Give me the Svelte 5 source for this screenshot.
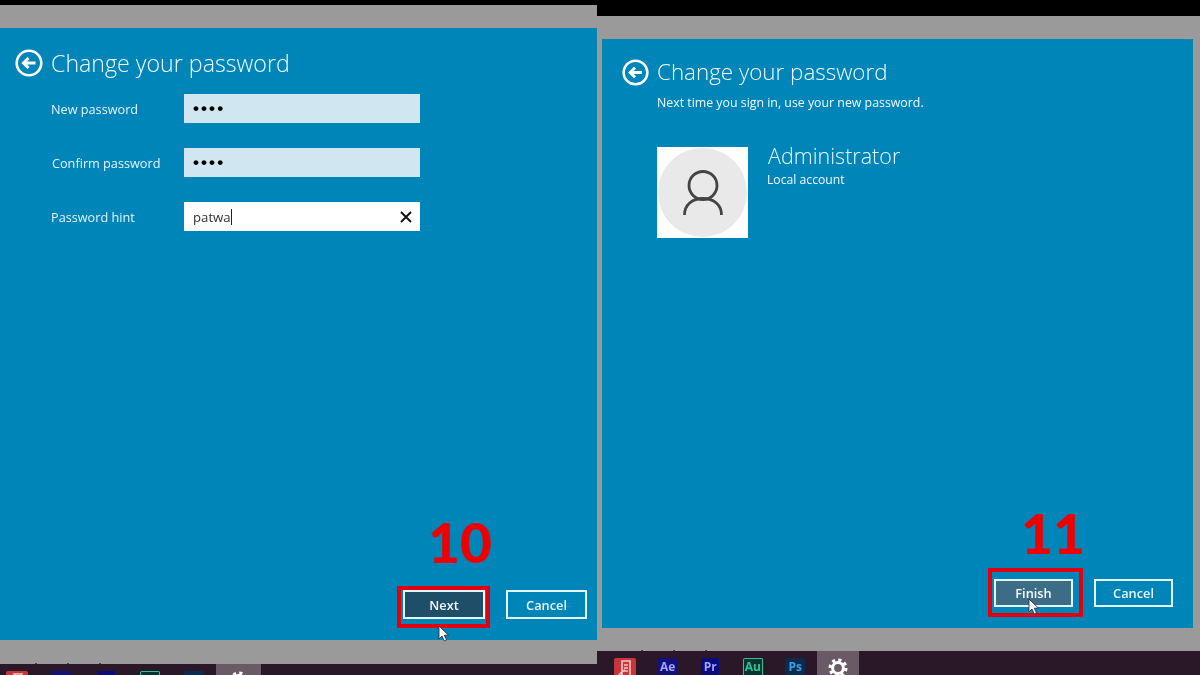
<script>
  const apps = [
    { label: '', cls: 'red' },
    { label: 'Ae', cls: 'ae' },
    { label: 'Pr', cls: 'pr' },
    { label: 'Au', cls: 'au' },
    { label: 'Ps', cls: 'ps' }
  ];
</script>

{#snippet back()}
  <svg class="back" viewBox="0 0 28 28" aria-hidden="true">
    <circle cx="14" cy="14" r="12.3" fill="none" stroke="#fff" stroke-width="2.6" />
    <path d="M20.5 14H9M13.5 9l-5 5 5 5" fill="none" stroke="#fff" stroke-width="3" />
  </svg>
{/snippet}

{#snippet pointer()}
  <svg class="pointer" viewBox="0 0 12 17" aria-hidden="true">
    <path d="M1 1v13l3-3 2.2 5 2.3-1-2.2-4.8H10.500z" fill="#fff" stroke="#223" stroke-width=".8" />
  </svg>
{/snippet}

{#snippet taskbar(showLabels)}
  <div class="taskbar">
    {#each apps as app}
      <div class="slot">
        <div class="app {app.cls}">
          {#if app.cls === 'red'}
            <svg viewBox="0 0 22 22" aria-hidden="true">
              <path d="M8 3h8v15H8zM10 7h4M10 10h4M10 13h4M4 19c2-5 4-5 7-7" fill="none" stroke="#f3c9c4" stroke-width="1.6" />
            </svg>
          {:else if showLabels}
            {app.label}
          {/if}
        </div>
      </div>
    {/each}
    <div class="slot active">
      <svg class="gear" viewBox="0 0 22 22" aria-hidden="true">
        <circle cx="11" cy="11" r="5.400" fill="none" stroke="#fff" stroke-width="3" />
        <circle cx="11" cy="11" r="7.800" fill="none" stroke="#fff" stroke-width="3.400" stroke-dasharray="3.060 3.066" />
      </svg>
    </div>
  </div>
{/snippet}

<div class="screen">
  <section class="pane left">
    <div class="frame">
      <div class="dialog">
        <header class="head">
          {@render back()}
          <h1>Change your password</h1>
        </header>
        <div class="form">
          <span class="label">New password</span>
          <div class="field filled"><span class="dots">••••</span></div>
          <span class="label confirm">Confirm password</span>
          <div class="field filled"><span class="dots">••••</span></div>
          <span class="label">Password hint</span>
          <div class="field">
            <span class="typed">patwa</span><span class="caret"></span>
            <svg class="clear" viewBox="0 0 12 12" aria-hidden="true">
              <path d="M1 1l10 10M11 1L1 11" stroke="#111" stroke-width="1.900" />
            </svg>
          </div>
        </div>
        <div class="actions">
          <div class="callout">
            <span class="step">10</span>
            <button class="btn primary">Next</button>
            {@render pointer()}
          </div>
          <button class="btn">Cancel</button>
        </div>
      </div>
      <div class="ticks"><i></i><i></i><i></i></div>
    </div>
    {@render taskbar(false)}
  </section>

  <section class="pane right">
    <div class="frame">
      <div class="dialog">
        <header class="head">
          {@render back()}
          <h1>Change your password</h1>
        </header>
        <p class="sub">Next time you sign in, use your new password.</p>
        <div class="account">
          <div class="avatar">
            <div class="disc">
              <svg viewBox="0 0 40 45" aria-hidden="true">
                <circle cx="20" cy="15.500" r="14" fill="none" stroke="#444" stroke-width="2.800" />
                <path d="M1.500 45C1.500 35 9 28.500 20 28.500S38.500 35 38.500 45" fill="none" stroke="#444" stroke-width="2.800" />
              </svg>
            </div>
          </div>
          <div class="who">
            <div class="name">Administrator</div>
            <div class="kind">Local account</div>
          </div>
        </div>
        <div class="actions">
          <div class="callout">
            <span class="step">11</span>
            <button class="btn primary">Finish</button>
            {@render pointer()}
          </div>
          <button class="btn">Cancel</button>
        </div>
      </div>
      <div class="ticks"><i></i><i></i><i></i></div>
    </div>
    {@render taskbar(true)}
  </section>
</div>

<style>
  :global(body) {
    margin: 0;
    background: #000;
  }

  .screen {
    display: grid;
    grid-template-columns: 597px 603px;
    height: 675px;
    overflow: hidden;
    background: #000;
    font-family: "Open Sans", "Noto Sans", sans-serif;
    color: #fff;
    filter: blur(0.5px);
  }

  .pane {
    display: flex;
    flex-direction: column;
    height: 675px;
    min-width: 0;
    box-sizing: border-box;
  }

  .left { padding-top: 5px; }
  .right { padding-top: 16px; }

  .frame {
    position: relative;
    flex: 1;
    display: flex;
    background: #9a9a9a;
    min-height: 0;
  }

  .left .frame { padding: 23px 0 24px; }
  .right .frame { padding: 23px 7px 23px 5px; }

  .dialog {
    flex: 1;
    display: flex;
    flex-direction: column;
    background: #0085b9;
    min-width: 0;
  }

  .left .dialog { padding: 21px 10px 21px 15px; }
  .right .dialog { padding: 19px 20px 21px 20px; }

  .ticks {
    position: absolute;
    bottom: 0;
    display: flex;
    gap: 30px;
  }

  .left .ticks { left: 35px; }
  .right .ticks { left: 44px; }

  .ticks i {
    width: 2px;
    height: 1px;
    background: #4a4048;
  }

  .head {
    display: flex;
    align-items: center;
    gap: 8px;
    height: 28px;
  }

  .back {
    width: 27px;
    height: 27px;
    flex: none;
  }

  .left .back {
    width: 28px;
    height: 28px;
  }

  h1 {
    margin: 0;
    font-weight: 300;
    font-size: 23.200px;
    line-height: 28px;
    white-space: nowrap;
    color: #f2fbff;
  }

  .right h1 { font-size: 22.400px; }

  .form {
    display: grid;
    grid-template-columns: 133px 236px;
    grid-auto-rows: 29px;
    row-gap: 25px;
    align-items: center;
    margin: 17px 0 0 36px;
  }

  .label {
    font-size: 12.700px;
    color: #e4f4fa;
    white-space: nowrap;
  }

  .confirm { padding-left: 1px; }

  .field {
    display: flex;
    align-items: center;
    height: 29px;
    padding: 0 9px;
    box-sizing: border-box;
    background: #fff;
    color: #333;
    font-size: 13.200px;
  }

  .filled { background: #d0e7f1; }

  .dots {
    font-family: "Liberation Sans", sans-serif;
    font-size: 17px;
    font-weight: 700;
    letter-spacing: 2.100px;
    color: #000;
  }

  .caret {
    width: 1px;
    height: 16px;
    background: #222;
  }

  .clear {
    width: 12px;
    height: 12px;
    margin-left: auto;
    margin-right: -1px;
  }

  .actions {
    display: flex;
    justify-content: flex-end;
    gap: 21px;
    margin-top: auto;
  }

  .btn {
    width: 81px;
    height: 29px;
    padding: 0;
    box-sizing: border-box;
    border: 2px solid #e2f6fc;
    background: transparent;
    color: #e8f8fd;
    font: 600 12.800px "Open Sans", "Noto Sans", sans-serif;
  }

  .right .btn { width: 79px; height: 28px; }

  .primary {
    width: 82px;
    background: #1f4f68;
    color: #f4fbfe;
  }

  .right .primary { background: #3d6c86; }

  .callout {
    position: relative;
    display: flex;
  }

  .callout::after {
    content: "";
    position: absolute;
    inset: -4px -5px -9px -6px;
    border: 4px solid #e2000f;
    pointer-events: none;
  }

  .right .callout::after { inset: -11px -10px -10px -6px; }

  .step {
    position: absolute;
    left: 25px;
    top: -84px;
    font: 900 55px/72px Lato, "Open Sans", sans-serif;
    color: #ee0000;
    white-space: nowrap;
  }

  .right .step { left: 27px; top: -82px; }

  .pointer {
    position: absolute;
    left: 35px;
    top: 35px;
    width: 12px;
    height: 17px;
    z-index: 1;
  }

  .right .pointer { left: 34px; top: 19px; }

  .sub {
    margin: 9px 0 0 35px;
    font-size: 12.350px;
    line-height: 16px;
    color: #f2fbff;
  }

  .account {
    display: flex;
    gap: 20px;
    margin: 36px 0 0 35px;
  }

  .avatar {
    display: flex;
    align-items: center;
    justify-content: center;
    width: 91px;
    height: 91px;
    background: #fff;
  }

  .disc {
    display: flex;
    align-items: center;
    justify-content: center;
    width: 89px;
    height: 89px;
    border-radius: 50%;
    background: #e9e9e9;
  }

  .disc svg {
    width: 40px;
    height: 45px;
  }

  .name {
    font-weight: 300;
    font-size: 21.500px;
    line-height: 18px;
    color: #e8f8fd;
  }

  .kind {
    margin-top: 7px;
    margin-left: -1px;
    font-size: 12.200px;
    line-height: 16px;
    color: #f2fbff;
  }

  .taskbar {
    display: flex;
    background: #2a1828;
    overflow: hidden;
  }

  .left .taskbar { height: 11px; }
  .right .taskbar { height: 24px; padding-left: 7px; }

  .slot {
    flex: none;
    display: flex;
    justify-content: center;
    width: 42.500px;
    padding-top: 7px;
    box-sizing: border-box;
  }

  .left .slot { width: 44.300px; }
  .left .slot:first-child { margin-left: -5px; }

  .app {
    display: flex;
    align-items: flex-start;
    justify-content: center;
    width: 20px;
    height: 17px;
    padding-top: 3px;
    box-sizing: border-box;
    border-radius: 2px 2px 0 0;
    font: 700 12px/12px "Open Sans", sans-serif;
  }

  .red { width: 22px; padding-top: 0; background: #c8353b; }
  .red svg { width: 22px; height: 22px; }
  .ae { background: #12127a; color: #a3a3ff; }
  .pr { width: 18px; background: #0b0b80; color: #a3a3ff; }
  .au { background: #04352e; border: 1.500px solid #2cc39a; border-bottom: 0; padding-top: 2px; color: #2cc39a; }
  .ps { background: #0a2c50; color: #3f9fe2; }

  .active {
    background: #6a5a66;
    padding-top: 6px;
  }

  .gear {
    width: 22px;
    height: 22px;
  }
</style>
